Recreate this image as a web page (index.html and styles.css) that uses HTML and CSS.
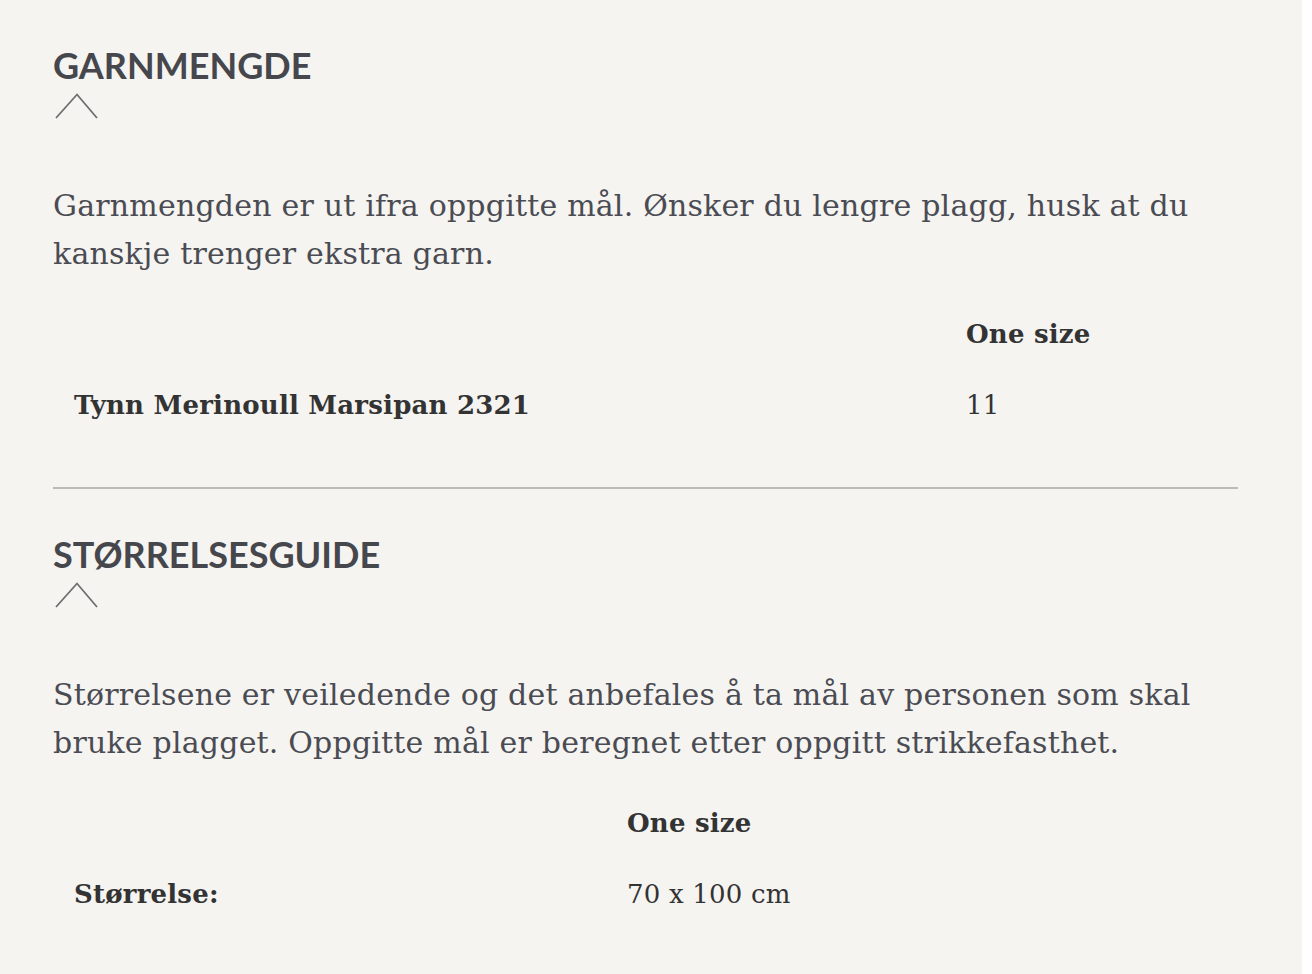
FILE: index.html
```html
<!DOCTYPE html>
<html lang="no">
<head>
<meta charset="utf-8">
<title>Garnmengde og størrelsesguide</title>
<link rel="stylesheet" href="styles.css">
</head>
<body>
<main class="page">
  <section class="block block--divided">
    <h2 class="block-title">GARNMENGDE</h2>
    <button class="toggle" type="button" aria-label="Skjul">
      <svg width="46" height="28" viewBox="0 0 46 28" aria-hidden="true"><path d="M3 26 L24 2.5 L44 26" fill="none" stroke="#6e6e6e" stroke-width="1.8"/></svg>
    </button>
    <p class="lead">Garnmengden er ut ifra oppgitte mål. Ønsker du lengre plagg, husk at du kanskje trenger ekstra garn.</p>
    <table class="spec">
      <colgroup><col class="col-label col-label--yarn"><col></colgroup>
      <thead><tr><th></th><th class="spec-head">One size</th></tr></thead>
      <tbody><tr><th class="spec-label">Tynn Merinoull Marsipan 2321</th><td class="spec-value">11</td></tr></tbody>
    </table>
  </section>
  <section class="block">
    <h2 class="block-title">STØRRELSESGUIDE</h2>
    <button class="toggle" type="button" aria-label="Skjul">
      <svg width="46" height="28" viewBox="0 0 46 28" aria-hidden="true"><path d="M3 26 L24 2.5 L44 26" fill="none" stroke="#6e6e6e" stroke-width="1.8"/></svg>
    </button>
    <p class="lead">Størrelsene er veiledende og det anbefales å ta mål av personen som skal bruke plagget. Oppgitte mål er beregnet etter oppgitt strikkefasthet.</p>
    <table class="spec">
      <colgroup><col class="col-label col-label--size"><col></colgroup>
      <thead><tr><th></th><th class="spec-head">One size</th></tr></thead>
      <tbody><tr><th class="spec-label">Størrelse:</th><td class="spec-value">70 x 100 cm</td></tr></tbody>
    </table>
  </section>
</main>
</body>
</html>
```
FILE: styles.css
```css
html, body {
  margin: 0;
  padding: 0;
  background: #ffffff;
}

.page {
  width: 1302px;
  min-height: 974px;
  box-sizing: border-box;
  background: #f5f4f1;
  padding: 0 64px 0 53px;
}

.block {
  padding: 45px 0 46.5px;
}

.block--divided {
  border-bottom: 2px solid #bcbbb8;
}

.block-title {
  margin: 0;
  font-family: Lato, "Open Sans", sans-serif;
  font-weight: 700;
  font-size: 36px;
  line-height: 40px;
  color: #46474d;
  letter-spacing: 0;
}

.toggle {
  display: block;
  margin: 7px 0 0;
  padding: 0;
  border: 0;
  background: none;
  width: 46px;
  height: 28px;
  cursor: pointer;
}

.toggle svg {
  display: block;
}

.lead {
  margin: 62px 0 0;
  font-family: "DejaVu Serif", serif;
  font-size: 30px;
  line-height: 48px;
  letter-spacing: 0.2px;
  color: #4b4c53;
}

.spec {
  width: 100%;
  margin-top: 20.5px;
  border-collapse: collapse;
  table-layout: fixed;
  font-family: "DejaVu Serif", serif;
  font-size: 26px;
  line-height: 36px;
  letter-spacing: 0.2px;
  color: #333333;
}

.col-label--yarn {
  width: 913px;
}

.col-label--size {
  width: 574px;
}

.spec th,
.spec td {
  padding: 17.5px 0;
  text-align: left;
  vertical-align: top;
}

.spec-head {
  font-weight: 700;
}

.spec-label {
  font-weight: 700;
  padding-left: 21px !important;
}

.spec-value {
  font-weight: 400;
}
```
